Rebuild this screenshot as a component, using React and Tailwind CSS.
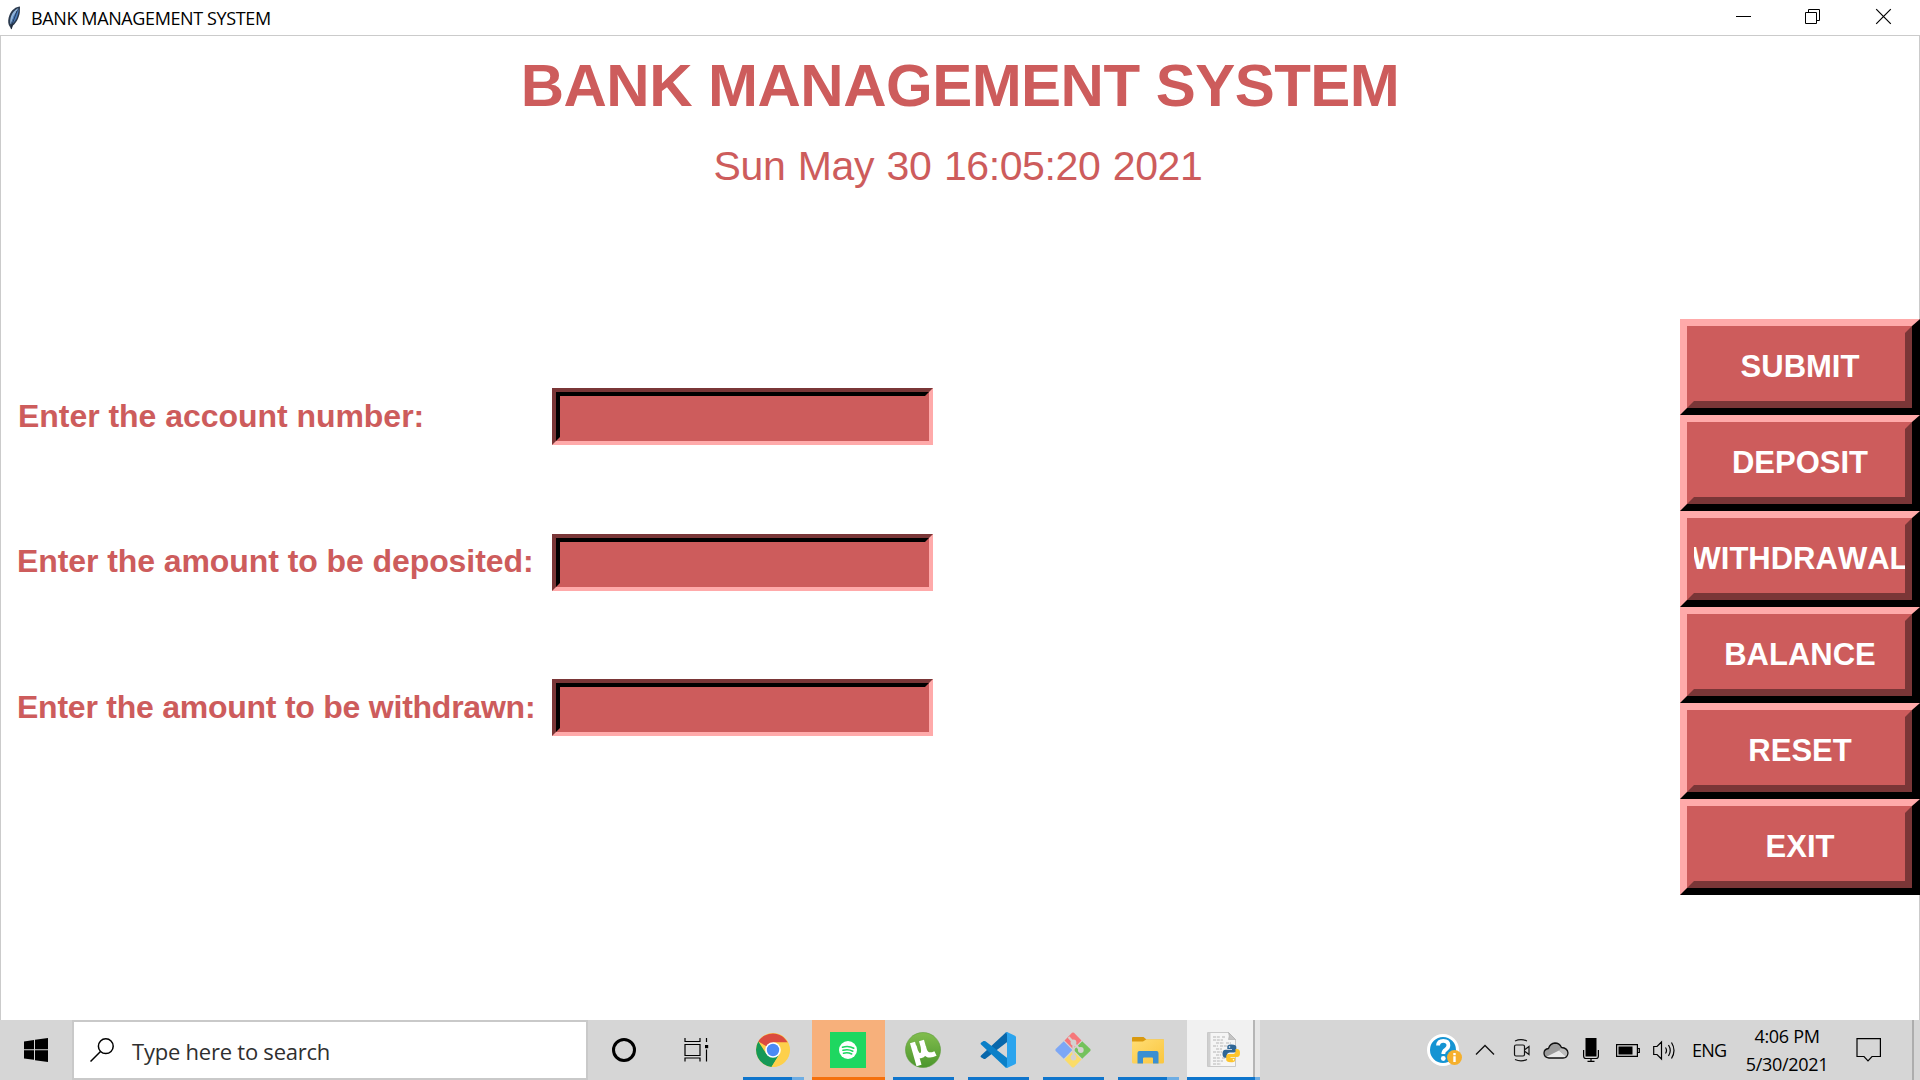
const UI = "font-['Open_Sans','Noto_Sans',sans-serif]";

const Feather = () => (
  <svg width="14" height="24" viewBox="0 0 14 24" className="shrink-0">
    <path d="M13 0.5C9 .5 4.500 4 2.500 9C1 13 .8 16 1.800 19L4.500 23.500L6 19.500C9.500 17 12 11.500 12.800 6.500Z" fill="#2b3a4e" />
    <path d="M11.500 2C8 3.500 5 7 3.800 11C3 14 3 16.500 3.500 18.500L7 10Z" fill="#8fb3da" />
    <path d="M11.800 3L6.500 10L4.200 18.500C8.500 16 11.300 10 11.800 3Z" fill="#4a7cbc" />
    <path d="M10 5L5 18.500L4.200 23" stroke="#16202e" strokeWidth="0.700" fill="none" />
  </svg>
);

const WindowControls = () => (
  <div className="flex h-full">
    <svg width="70" height="35" viewBox="0 0 70 35"><path d="M28 16.500h15" stroke="#000" /></svg>
    <svg width="70" height="35" viewBox="0 0 70 35" fill="none" stroke="#000">
      <path d="M27.500 12.500h11v11h-11zM30.500 12v-2.500h11v11h-3" />
    </svg>
    <svg width="72" height="35" viewBox="0 0 72 35"><path d="M28.200 9.200l14.600 14.600M42.800 9.200L28.200 23.800" stroke="#000" strokeWidth="1.200" /></svg>
  </div>
);

const Entry = () => (
  <div className="h-[57px] w-[381px] border-4 border-t-[#7a3637] border-l-[#7a3637] border-r-[#ffaaaa] border-b-[#ffaaaa] bg-[#cd5c5c]">
    <input className="block h-full w-full border-4 border-t-black border-l-black border-r-[#cd5c5c] border-b-[#cd5c5c] bg-[#cd5c5c] px-1 text-white outline-none" />
  </div>
);

const Field = ({ label, spacing }) => (
  <div className="flex h-[57px] items-center">
    <label className={"w-[535px] whitespace-nowrap pb-[2px] text-[32px] leading-none font-bold " + spacing}>{label}</label>
    <Entry />
  </div>
);

const ActionButton = ({ label }) => (
  <button className="block h-24 w-60 border-7 border-r-8 border-t-[#ffaaaa] border-l-[#ffaaaa] border-r-black border-b-black bg-[#cd5c5c]">
    <span className="flex h-full w-full items-center justify-center border-7 border-t-[#cd5c5c] border-l-[#cd5c5c] border-r-[#7a3637] border-b-[#7a3637]">
      <span className="flex w-full justify-center overflow-hidden pl-px text-[31px] leading-[36px] font-bold text-white">{label}</span>
    </span>
  </button>
);

const ChromeIcon = () => (
  <svg width="36" height="36" viewBox="0 0 36 36">
    <circle cx="18" cy="18" r="17" fill="#fdd04b" />
    <path d="M18 18L3.300 9.500A17 17 0 0 1 32.700 10.500H18Z" fill="#db4b3f" />
    <path d="M3.300 9.500A17 17 0 0 0 16.500 34.900L24.500 22L11.500 22Z" fill="#159957" />
    <path d="M32.700 10.500A17 17 0 0 1 16.500 34.900L25 21.500L18 10.500Z" fill="#fdd04b" />
    <circle cx="18" cy="18" r="7.800" fill="#fff" />
    <circle cx="18" cy="18" r="6.200" fill="#4a8af5" />
  </svg>
);

const SpotifyIcon = () => (
  <svg width="36" height="36" viewBox="0 0 36 36">
    <path fill="#1ed760" d="M0 0h36v36H0z" />
    <circle cx="18" cy="18" r="9" fill="#fff" />
    <path d="M12.500 15.200c4-1.200 8-.8 11.300 1M13 18.300c3.500-1 7-.6 9.800.9M13.500 21.200c3-.8 5.800-.4 8.200.8" stroke="#1ed760" strokeWidth="1.600" fill="none" strokeLinecap="round" />
  </svg>
);

const UTorrentIcon = () => (
  <svg width="36" height="36" viewBox="0 0 36 36">
    <defs>
      <linearGradient id="ut" x1="0" y1="0" x2="0" y2="1"><stop offset="0" stopColor="#82bd4e" /><stop offset="1" stopColor="#4b962c" /></linearGradient>
    </defs>
    <circle cx="18" cy="18" r="17.500" fill="url(#ut)" stroke="#5a9a38" strokeWidth="0.600" />
    <path d="M7.500 10.500L14 33.500M9 14C10.500 21 13 24.500 16 23.500C20 22.500 19 16 16.500 8.500M18.500 15C20 22 23 25 30.500 21.500" stroke="#fff" strokeWidth="5.200" fill="none" />
  </svg>
);

const CodeIcon = () => (
  <svg width="36" height="36" viewBox="0 0 36 36">
    <path d="M1 25.200Q0 24.300 1 23.400L25 1.200Q26 0 27.500 .3V9.800L5.500 26.700Q4.500 27.400 3.500 26.700Z" fill="#0867ab" />
    <path d="M1 12.600Q0 11.700 1 10.800L3.500 9.100Q4.500 8.600 5.500 9.300L27.500 26.200V35.700Q26 36 25 34.900Z" fill="#0b80c8" />
    <path d="M25 1.200Q26 0 27.500.3L35 3.700Q36 4.200 36 5.200V30.800Q36 31.800 35 32.300L27.500 35.800Q26 36 25 34.900Q27 36 27 33.500V2.500Q27 .3 25 1.200Z" fill="#2ba4ee" />
  </svg>
);

const GitIcon = () => (
  <svg width="36" height="36" viewBox="0 0 36 36">
    <path d="M17 .8Q18 0 19 .8L26.500 8.500L18 17L9.500 8.500Z" fill="#f6777a" />
    <path d="M27.200 9.200L35.300 17Q36 18 35.300 19L27.200 26.800L18.700 18Z" fill="#74c25c" />
    <path d="M8.800 9.200L17.300 18L8.800 26.800L.7 19Q0 18 .7 17Z" fill="#7da7f5" />
    <path d="M18 19L26.500 27.500L19 35.200Q18 36 17 35.200L9.500 27.500Z" fill="#fbdc68" />
    <path d="M13.500 5L18.500 10.500V26M18.500 11L25.500 18" stroke="#d5d1cf" strokeWidth="2.300" fill="none" />
    <g fill="#d5d1cf"><circle cx="18.500" cy="10.500" r="2.900" /><circle cx="25.800" cy="18" r="2.900" /><circle cx="18.500" cy="25.500" r="2.900" /></g>
  </svg>
);

const ExplorerIcon = () => (
  <svg width="36" height="36" viewBox="0 0 36 36">
    <defs><linearGradient id="fo" x1="0" y1="0" x2="1" y2="1"><stop offset="0" stopColor="#ffdd75" /><stop offset="1" stopColor="#fac63e" /></linearGradient></defs>
    <path d="M2 6Q2 5 3 5H13.500L16.500 7.500H33Q34 7.500 34 8.500V14H2Z" fill="#d9990f" />
    <path d="M2 9.500H13L16.500 7.300H33Q34 7.300 34 8.300V30Q34 31.500 32.500 31.500H3.500Q2 31.500 2 30Z" fill="url(#fo)" />
    <path d="M7.500 31.500V21Q7.500 19 9.500 19H26.500Q28.500 19 28.500 21V31.500H23V26.500Q23 25.500 22 25.500H14Q13 25.500 13 26.500V31.500Z" fill="#3a8fd2" />
  </svg>
);

const PythonFileIcon = () => (
  <svg width="36" height="36" viewBox="0 0 36 36">
    <path d="M3.500 .5H24.500L31.500 7.500V34.500H3.500Z" fill="#f5f5f5" stroke="#c9c9c9" />
    <path d="M4 1h2.500v33H4z" fill="#cfcfcf" />
    <path d="M24.500 .5Q26 4 24.500 7.500H31.500Z" fill="#c4c4c4" stroke="#aaa" strokeWidth=".6" />
    <path d="M9 5h7m2 0h3M9 8h10M12 11h8m2 0h5M9 14h5m2 0h8M12 17h6M9 20h9M12 23h5M9 26h7m2 0h4M9 29h10M9 32h8" stroke="#b5b5b5" strokeWidth="1" strokeDasharray="3 .8" />
    <path d="M27.500 12.500c-4 0-4.200 1.500-4.200 2.500v2h4.700v.8h-6.500c-2 0-3 1.600-3 4s1 4 3 4h1.500v-2.500c0-1.600 1.300-2.700 3-2.700h4c1.400 0 2.300-1 2.300-2.300V15c0-1.400-1.300-2.500-4.800-2.500z" fill="#2f6696" />
    <path d="M28.500 31c4 0 4.200-1.500 4.200-2.500v-2H28v-.8h6.500c2 0 3-1.600 3-4s-1-4-3-4H33v2.500c0 1.600-1.300 2.700-3 2.700h-4c-1.400 0-2.300 1-2.300 2.300v3.300c0 1.400 1.300 2.500 4.800 2.500z" transform="translate(-1.500 -.8)" fill="#fdc52c" />
    <circle cx="25.500" cy="15" r=".8" fill="#fff" /><circle cx="29.500" cy="27.800" r=".8" fill="#fff" />
  </svg>
);

const Underline = ({ split }) => (
  <span className="flex h-[3px] w-[61px]">
    <span className="h-full flex-1 bg-[#0f75cc]" />
    {split && <span className="h-full w-3 bg-[#6eade3]" />}
  </span>
);

const TaskbarApp = ({ children, split }) => (
  <div className="flex h-[60px] w-[75px] flex-col items-center justify-between">
    <span className="flex h-[57px] items-center pt-[3px] pr-[2px]">{children}</span>
    <Underline split={split} />
  </div>
);

const HelpIcon = () => (
  <div className="relative h-8 w-8 rounded-full border-[3px] border-white bg-[#1594d3]">
    <svg width="26" height="26" viewBox="0 0 26 26">
      <path d="M8 8.500Q8.300 3.800 13.300 3.800Q18.400 3.800 18.400 8.300Q18.400 11 15.500 12.800Q13.300 14.200 13.300 17" fill="none" stroke="#fff" strokeWidth="3.800" />
      <circle cx="13.300" cy="21.500" r="2.400" fill="#fff" />
    </svg>
    <svg width="15" height="15" viewBox="0 0 15 15" className="absolute top-[13px] left-[17px]">
      <circle cx="7.500" cy="7.500" r="7.500" fill="#f5b02d" />
      <path d="M6.300 6.300h2.400v5.700H6.300zM6.300 3h2.400v2.200H6.300z" fill="#fff" />
    </svg>
  </div>
);

const TrayIcons = () => (
  <>
    <svg width="20" height="24" viewBox="0 0 20 24" className="ml-[16px]"><path d="M1 16.500L10 7.500L19 16.500" stroke="#111" strokeWidth="1.300" fill="none" /></svg>
    <svg width="18" height="24" viewBox="0 0 18 24" className="ml-[18px]" fill="none" stroke="#111" strokeWidth="1.200">
      <rect x="1.500" y="7" width="10" height="11" rx="1.500" /><path d="M12 11.500L16 8.500V16.500L12 13.500M2 3Q8 .3 14 3M2 21.500Q8 24.200 14 21.500" />
    </svg>
    <svg width="26" height="24" viewBox="0 0 26 24" className="ml-[12px]">
      <path d="M6 20Q1 19.500 1 15Q1.300 11 5.500 10.500Q7 5.500 12 5Q16.500 5 18.500 9.500Q24.500 10 25 15Q24.500 20 20 20Z" fill="#9b9b9b" />
      <path d="M6 20L4 18.500L16 12.500L23 18.500L20 20Z" fill="#e8e8e8" /><path d="M16 12.500L18.500 9.500Q24.500 10 25 15Q25 17 23 18.500Z" fill="#bdbdbd" />
      <path d="M6 20Q1 19.500 1 15Q1.300 11 5.500 10.500Q7 5.500 12 5Q16.500 5 18.500 9.500Q24.500 10 25 15Q24.500 20 20 20Z" fill="none" stroke="#111" strokeWidth="1.300" />
    </svg>
    <svg width="16" height="24" viewBox="0 0 16 24" className="ml-[14px]">
      <path d="M2.500 0h11v18.500h-11z" /><path d="M.6 12v6Q.6 20.500 3 20.500H13Q15.400 20.500 15.400 18V12M8 20.500V23.500M4.500 23.400h7" fill="none" stroke="#000" strokeWidth="1.200" />
    </svg>
    <svg width="24" height="24" viewBox="0 0 24 24" className="ml-[17px]"><path d="M.6 6.600h20.800v11.800H.6zM22 10.500h1.300v4H22" fill="none" stroke="#000" strokeWidth="1.200" /><path d="M2.500 8.500h14v8h-14z" /></svg>
    <svg width="24" height="24" viewBox="0 0 24 24" className="ml-[13px]" fill="none" stroke="#000" strokeWidth="1.200"><path d="M.7 8.500H4L8.500 4V21L4 16.500H.7zM12.500 9.500Q14.500 12.500 12.500 15.500M15.500 7Q19 12.500 15.500 18M18.500 4.500Q23.500 12.500 18.500 20.500" /></svg>
  </>
);

export default function App() {
  return (
    <div className="flex h-[1080px] w-[1920px] flex-col overflow-hidden bg-white">
      <header className="flex h-[35px] items-center justify-between">
        <div className="flex items-center gap-[10px] pl-[7px]">
          <Feather />
          <span className={UI + " text-[18px] leading-6 tracking-[-0.380px] whitespace-nowrap text-black"}>BANK MANAGEMENT SYSTEM</span>
        </div>
        <WindowControls />
      </header>

      <main className="flex h-[985px] flex-col border border-b-0 border-[#cbcbcb] font-['Liberation_Sans',Arial,sans-serif] text-[#cd5c5c] [font-kerning:none]">
        <h1 className="mt-[15px] text-center text-[60px] leading-[69px] font-bold tracking-[-0.520px]">BANK MANAGEMENT SYSTEM</h1>
        <p className="mt-[22px] -translate-x-[2px] text-center text-[41px] leading-[48px] tracking-[-0.400px] [word-spacing:1.500px]">Sun May 30 16:05:20 2021</p>
        <div className="mt-[129px] -mr-px flex items-start justify-between">
          <div className="flex flex-col gap-[88.500px] pt-[69px] pl-[16px]">
            <Field label="Enter the account number:" spacing="pl-[1px] tracking-[-0.040px]" />
            <Field label="Enter the amount to be deposited:" spacing="tracking-[-0.080px]" />
            <Field label="Enter the amount to be withdrawn:" spacing="tracking-[-0.240px]" />
          </div>
          <div className="flex flex-col">
            {["SUBMIT", "DEPOSIT", "WITHDRAWAL", "BALANCE", "RESET", "EXIT"].map((t) => <ActionButton key={t} label={t} />)}
          </div>
        </div>
      </main>

      <footer className={UI + " flex h-[60px] bg-[#d6d6d6] text-black"}>
        <div className="flex w-[72px] items-center justify-center">
          <svg width="24" height="24" viewBox="0 0 24 24"><path d="M0 3.400L10 2V11.300H0zM11 1.800L24 0V11.300H11zM0 12.300H10V21.800L0 20.500zM11 12.300H24V24L11 22.200z" /></svg>
        </div>
        <div className="flex w-[516px] items-center border-2 border-[#c9c9c9] bg-white pl-4">
          <svg width="24" height="24" viewBox="0 0 24 24" fill="none" stroke="#000" strokeWidth="1.500"><circle cx="15.800" cy="8.200" r="7.400" /><path d="M10.500 13.500L.5 23.500" /></svg>
          <span className="ml-[18px] pt-px text-[22px] leading-7 tracking-[-0.230px] whitespace-nowrap text-[#2f2f2f]">Type here to search</span>
        </div>
        <div className="flex w-[73px] items-center justify-center pr-px">
          <span className="h-6 w-6 rounded-full border-[3.500px] border-black" />
        </div>
        <div className="flex w-[75px] items-center justify-center pr-[3px]">
          <svg width="26" height="24" viewBox="0 0 26 24" fill="none" stroke="#000" strokeWidth="1.200"><path d="M1 0V3.500H16V0M1 6.500H16V17.500H1zM1 23.500V20H16V23.500M22.500 0V4M22.500 11.500V23.500" /><path d="M21 7h3.200v3.200H21z" fill="#000" stroke="none" /></svg>
        </div>
        <TaskbarApp split><ChromeIcon /></TaskbarApp>
        <div className="flex w-[75px] justify-center">
          <div className="flex w-[73px] items-center justify-center border-b-[3px] border-[#f5700c] bg-[#f7b07b] pt-[3px] pr-px"><SpotifyIcon /></div>
        </div>
        <TaskbarApp><UTorrentIcon /></TaskbarApp>
        <TaskbarApp><CodeIcon /></TaskbarApp>
        <TaskbarApp><GitIcon /></TaskbarApp>
        <TaskbarApp split><ExplorerIcon /></TaskbarApp>
        <div className="ml-px flex">
          <div className="flex w-[66px] items-center justify-center border-b-[3px] border-[#0f75cc] bg-[#f1f1f1] pt-[3px] pl-1"><PythonFileIcon /></div>
          <div className="w-[2px] border-b-[3px] border-[#0f75cc] bg-[#b5b5b5]" />
          <div className="w-[5px] border-b-[3px] border-[#6eade3] bg-[#e6e6e6]" />
        </div>
        <div className="ml-auto flex items-center">
          <HelpIcon />
          <TrayIcons />
          <span className="ml-[15px] w-[36px] text-[18px] tracking-[-0.800px]">ENG</span>
          <div className="ml-[14px] flex w-[90px] flex-col text-center text-[18px] leading-[28px] tracking-[-0.300px] whitespace-nowrap">
            <span>4:06 PM</span>
            <span>5/30/2021</span>
          </div>
          <svg width="26" height="24" viewBox="0 0 26 24" className="mr-[30px] ml-[24px]" fill="none" stroke="#000" strokeWidth="1.200"><path d="M1 .6H24.400V18.500H16L12 22.800L8 18.500H1z" /></svg>
          <span className="mr-[6px] h-[60px] w-[2px] bg-[#adadad]" />
        </div>
      </footer>
    </div>
  );
}
